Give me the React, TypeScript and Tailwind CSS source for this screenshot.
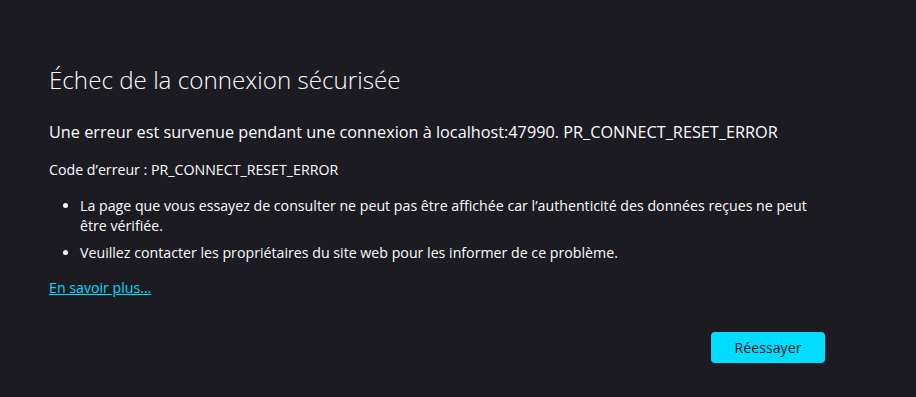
export default function App() {
  return (
    <div className="min-h-[397px] w-full bg-[#1c1b22] text-[#fbfbfe] font-['Open_Sans',sans-serif]">
      <div className="ml-[49px] w-[776px] pt-[62px]">
        <h1 className="text-[24.2px] font-light leading-[36px]">Échec de la connexion sécurisée</h1>
        <p className="mt-[22px] text-[16.25px] leading-[24px]">
          Une erreur est survenue pendant une connexion à localhost:47990. PR_CONNECT_RESET_ERROR
        </p>
        <p className="mt-[16px] text-[14.2px] leading-[20px]">Code d’erreur : PR_CONNECT_RESET_ERROR</p>
        <ul className="mt-[16px] list-disc pl-[31px] text-[14.2px] leading-[20px]">
          <li className="mb-[7px]">
            La page que vous essayez de consulter ne peut pas être affichée car l’authenticité des données reçues ne peut être vérifiée.
          </li>
          <li>Veuillez contacter les propriétaires du site web pour les informer de ce problème.</li>
        </ul>
        <a href="#" className="mt-[15px] inline-block text-[14.2px] leading-[20px] text-[#00ddff] underline">
          En savoir plus…
        </a>
        <div className="mt-[33px] flex justify-end">
          <button className="h-[31px] w-[114px] rounded-[4px] bg-[#00ddff] text-[14.2px] text-[#15141a]">
            Réessayer
          </button>
        </div>
      </div>
    </div>
  );
}
